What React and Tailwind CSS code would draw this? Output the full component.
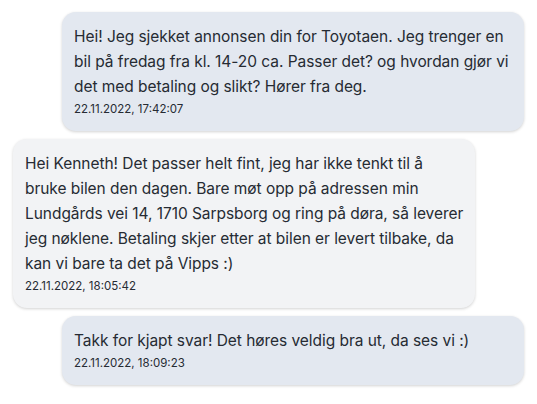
const messages = [
  {
    mine: true,
    lines: [
      'Hei! Jeg sjekket annonsen din for Toyotaen. Jeg trenger en',
      'bil på fredag fra kl. 14-20 ca. Passer det? og hvordan gjør vi',
      'det med betaling og slikt? Hører fra deg.',
    ],
    time: '22.11.2022, 17:42:07',
  },
  {
    mine: false,
    lines: [
      'Hei Kenneth! Det passer helt fint, jeg har ikke tenkt til å',
      'bruke bilen den dagen. Bare møt opp på adressen min',
      'Lundgårds vei 14, 1710 Sarpsborg og ring på døra, så leverer',
      'jeg nøklene. Betaling skjer etter at bilen er levert tilbake, da',
      'kan vi bare ta det på Vipps :)',
    ],
    time: '22.11.2022, 18:05:42',
  },
  {
    mine: true,
    lines: ['Takk for kjapt svar! Det høres veldig bra ut, da ses vi :)'],
    time: '22.11.2022, 18:09:23',
  },
];

const Bubble = ({ mine, lines, time }) => (
  <div className={mine ? 'flex justify-end' : 'flex justify-start'}>
    <div
      className={
        'w-[462px] rounded-[14px] px-3 pt-3 pb-[14px] shadow-[0_1px_3px_rgba(0,0,0,0.18)] ' +
        (mine ? 'bg-[#e3e8f0]' : 'bg-[#f2f3f5]')
      }
    >
      <p className="text-[15.5px] leading-[25px] tracking-[-0.05px] text-[#262b33]">
        {lines.map((line) => (
          <span key={line} className="block whitespace-nowrap">
            {line}
          </span>
        ))}
      </p>
      <p className="mt-[3px] text-[11.5px] leading-[15px] text-[#262b33]">{time}</p>
    </div>
  </div>
);

export default function App() {
  return (
    <div
      className="min-h-screen bg-white px-[13px] pt-3 flex flex-col gap-[8px]"
      style={{ fontFamily: 'Inter, "Noto Sans", sans-serif' }}
    >
      {messages.map((m) => (
        <Bubble key={m.time} {...m} />
      ))}
    </div>
  );
}
